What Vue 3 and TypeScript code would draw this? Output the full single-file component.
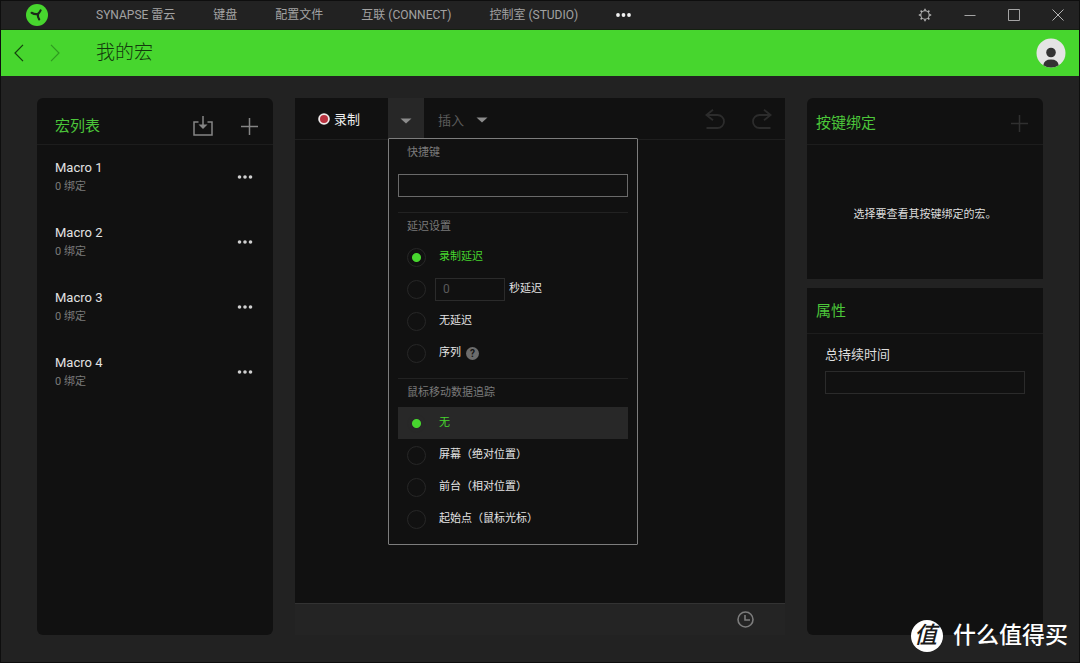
<script setup lang="ts">
import { ref } from 'vue'

interface Macro {
  name: string
  bindings: number
}

interface Option {
  id: string
  label: string
}

const tabs: string[] = ['SYNAPSE 雷云', '键盘', '配置文件', '互联 (CONNECT)', '控制室 (STUDIO)']

const macros: Macro[] = [
  { name: 'Macro 1', bindings: 0 },
  { name: 'Macro 2', bindings: 0 },
  { name: 'Macro 3', bindings: 0 },
  { name: 'Macro 4', bindings: 0 },
]

const trackingOptions: Option[] = [
  { id: 'none', label: '无' },
  { id: 'screen', label: '屏幕（绝对位置）' },
  { id: 'foreground', label: '前台（相对位置）' },
  { id: 'origin', label: '起始点（鼠标光标）' },
]

const delay = ref('record')
const tracking = ref('none')
const shortcut = ref('')
const fixedDelay = ref('')
const duration = ref('')
const gearAngles: number[] = [0, 45, 90, 135, 180, 225, 270, 315]
</script>

<template>
  <div class="window">
    <header class="topbar">
      <svg class="logo" viewBox="0 0 22 22" aria-hidden="true">
        <circle cx="11" cy="11" r="11" fill="#47d62e" />
        <path d="M5.600 8.800Q8.600 10.600 11.600 10.100Q13.400 9 14.600 6.400M11.800 10.200Q11.600 12.800 13.200 15.400" fill="none" stroke="#1c2a1a" stroke-width="2.200" stroke-linecap="round" />
        <path d="M8.600 9.600L13.600 8.400L12.600 12.800Z" fill="#1c2a1a" />
      </svg>
      <nav class="tabs">
        <a v-for="tab in tabs" :key="tab" href="#" class="tab">{{ tab }}</a>
        <button class="icon-btn" type="button" aria-label="更多">
          <svg width="16" height="4" viewBox="0 0 16 4"><g fill="#f2f2f2"><circle cx="2" cy="2" r="1.900" /><circle cx="7.500" cy="2" r="1.900" /><circle cx="13" cy="2" r="1.900" /></g></svg>
        </button>
      </nav>
      <div class="window-controls">
        <button class="icon-btn" type="button" aria-label="设置">
          <svg width="14" height="14" viewBox="0 0 14 14" fill="none" stroke="#b4b4b4">
            <circle cx="7" cy="7" r="4.200" stroke-width="1.100" />
            <path v-for="a in gearAngles" :key="a" d="M7 2.800V.8" stroke-width="1.500" :transform="`rotate(${a} 7 7)`" />
          </svg>
        </button>
        <button class="icon-btn" type="button" aria-label="最小化">
          <svg width="12" height="12" viewBox="0 0 12 12"><path d="M.5 6.500h11" stroke="#a4a4a4" /></svg>
        </button>
        <button class="icon-btn" type="button" aria-label="最大化">
          <svg width="12" height="12" viewBox="0 0 12 12"><path d="M.5 .5h11v11H.5z" fill="none" stroke="#a4a4a4" /></svg>
        </button>
        <button class="icon-btn" type="button" aria-label="关闭">
          <svg width="12" height="12" viewBox="0 0 12 12"><path d="M.5 .5l11 11M11.500 .5l-11 11" stroke="#b4b4b4" /></svg>
        </button>
      </div>
    </header>

    <div class="titlebar">
      <div class="history">
        <button class="icon-btn" type="button" aria-label="后退">
          <svg width="10" height="18" viewBox="0 0 10 18"><path d="M9 .8L1 9l8 8.200" fill="none" stroke="#14400e" stroke-width="1.200" /></svg>
        </button>
        <button class="icon-btn" type="button" aria-label="前进">
          <svg width="10" height="18" viewBox="0 0 10 18"><path d="M1 .8L9 9l-8 8.200" fill="none" stroke="#2f9a20" stroke-width="1.200" /></svg>
        </button>
      </div>
      <h1 class="page-title">我的宏</h1>
      <button class="icon-btn avatar" type="button" aria-label="账户">
        <svg width="30" height="30" viewBox="0 0 30 30">
          <circle cx="15" cy="15" r="14.500" fill="#e4e4e4" />
          <circle cx="15" cy="14.500" r="4.800" fill="#333" />
          <path d="M7.300 27.300Q8 21.500 15 21.500Q22 21.500 22.700 27.300Q19.500 29.500 15 29.500Q10.500 29.500 7.300 27.300Z" fill="#333" />
        </svg>
      </button>
    </div>

    <main class="content">
      <section class="panel macro-panel">
        <div class="panel-head list-head">
          <h2>宏列表</h2>
          <button class="icon-btn" type="button" aria-label="导入">
            <svg width="20" height="20" viewBox="0 0 20 20" fill="none" stroke="#858585" stroke-width="1.500">
              <path d="M5.500 6H1v13h18V6h-4.500M10 0v10" />
              <path d="M5.500 8.500h9L10 13z" fill="#858585" stroke="none" />
            </svg>
          </button>
          <button class="icon-btn" type="button" aria-label="新增宏">
            <svg width="17" height="17" viewBox="0 0 17 17"><path d="M8.500 0v17M0 8.500h17" stroke="#858585" stroke-width="1.500" /></svg>
          </button>
        </div>
        <ul class="macros">
          <li v-for="macro in macros" :key="macro.name" class="macro">
            <div>
              <div class="macro-name">{{ macro.name }}</div>
              <div class="macro-sub">{{ macro.bindings }} 绑定</div>
            </div>
            <button class="icon-btn" type="button" :aria-label="macro.name + ' 菜单'">
              <svg width="16" height="4" viewBox="0 0 16 4"><g fill="#d0d0d0"><circle cx="2.500" cy="2" r="1.800" /><circle cx="8" cy="2" r="1.800" /><circle cx="13.500" cy="2" r="1.800" /></g></svg>
            </button>
          </li>
        </ul>
      </section>

      <section class="editor">
        <div class="toolbar">
          <button class="tool record" type="button">
            <svg width="12" height="12" viewBox="0 0 12 12"><circle cx="6" cy="6" r="5.800" fill="#f0eaea" /><circle cx="6" cy="6" r="4" fill="#b9323f" /></svg>
            录制
          </button>
          <div class="dropdown">
            <button class="tool caret open" type="button" aria-label="录制选项" aria-expanded="true">
              <svg width="12" height="6" viewBox="0 0 12 6"><path d="M.5 .5h11L6 5.500z" fill="#8c8c8c" /></svg>
            </button>
            <div class="menu">
              <label class="menu-title" for="shortcut">快捷键</label>
              <input id="shortcut" v-model="shortcut" class="field shortcut" type="text" />

              <fieldset class="group">
                <legend class="menu-title">延迟设置</legend>
                <label class="option" :class="{ active: delay === 'record' }">
                  <input v-model="delay" type="radio" name="delay" value="record" />
                  <span>录制延迟</span>
                </label>
                <div class="option fixed">
                  <input id="delay-fixed" v-model="delay" type="radio" name="delay" value="fixed" />
                  <input v-model="fixedDelay" class="field seconds" type="text" placeholder="0" aria-label="延迟秒数" />
                  <label for="delay-fixed">秒延迟</label>
                </div>
                <label class="option">
                  <input v-model="delay" type="radio" name="delay" value="off" />
                  <span>无延迟</span>
                </label>
                <label class="option">
                  <input v-model="delay" type="radio" name="delay" value="sequence" />
                  <span>序列</span>
                  <span class="help">?</span>
                </label>
              </fieldset>

              <fieldset class="group tracking">
                <legend class="menu-title">鼠标移动数据追踪</legend>
                <label
                  v-for="option in trackingOptions"
                  :key="option.id"
                  class="option"
                  :class="{ active: tracking === option.id, filled: tracking === option.id }"
                >
                  <input v-model="tracking" type="radio" name="tracking" :value="option.id" />
                  <span>{{ option.label }}</span>
                </label>
              </fieldset>
            </div>
          </div>
          <button class="tool insert" type="button">
            插入
            <svg width="12" height="6" viewBox="0 0 12 6"><path d="M.5 .5h11L6 5.500z" fill="#8c8c8c" /></svg>
          </button>
          <div class="undo-redo">
            <button class="icon-btn" type="button" aria-label="撤销">
              <svg width="20" height="20" viewBox="0 0 20 20" fill="none" stroke="#2c2c2c" stroke-width="1.800"><path d="M8 .8L1.400 6L8 11.200M1.400 6H12.500a6.500 6.500 0 0 1 0 13H1.500" /></svg>
            </button>
            <button class="icon-btn" type="button" aria-label="重做">
              <svg width="20" height="20" viewBox="0 0 20 20" fill="none" stroke="#2c2c2c" stroke-width="1.800"><path d="M12 .8L18.600 6L12 11.200M18.600 6H7.500a6.500 6.500 0 0 0 0 13H18.500" /></svg>
            </button>
          </div>
        </div>
        <div class="canvas"></div>
        <div class="editor-foot">
          <button class="icon-btn" type="button" aria-label="时间">
            <svg width="17" height="17" viewBox="0 0 17 17" fill="none" stroke="#7c7c7c" stroke-width="1.600"><circle cx="8.500" cy="8.500" r="7.500" /><path d="M8 4v5h5" /></svg>
          </button>
        </div>
      </section>

      <div class="side">
        <section class="panel key-panel">
          <div class="panel-head key-head">
            <h2>按键绑定</h2>
            <button class="icon-btn" type="button" aria-label="新增绑定">
              <svg width="17" height="17" viewBox="0 0 17 17"><path d="M8.500 0v17M0 8.500h17" stroke="#303030" stroke-width="1.500" /></svg>
            </button>
          </div>
          <p class="empty">选择要查看其按键绑定的宏。</p>
        </section>
        <section class="panel prop-panel">
          <div class="panel-head prop-head"><h2>属性</h2></div>
          <div class="props">
            <label for="duration">总持续时间</label>
            <input id="duration" v-model="duration" class="field" type="text" />
          </div>
        </section>
      </div>
    </main>

    <div class="watermark">
      <span class="stamp">值</span>
      <span>什么值得买</span>
    </div>
  </div>
</template>

<style>
body {
  background: #111;
}
</style>

<style scoped>
.window,
.window * {
  box-sizing: border-box;
}

.window {
  position: relative;
  display: flex;
  flex-direction: column;
  min-height: 100vh;
  border: 1px solid #0e0e0e;
  background: #222;
  color: #ddd;
  font-family: Roboto, "Noto Sans CJK SC", sans-serif;
  font-size: 11px;
}

button,
input {
  font: inherit;
}

.icon-btn {
  display: flex;
  padding: 0;
  border: 0;
  background: none;
}

.icon-btn svg,
.tool svg {
  display: block;
  flex: none;
}

h1,
h2,
p,
ul,
fieldset {
  margin: 0;
  padding: 0;
}

.topbar {
  display: flex;
  align-items: center;
  height: 29px;
  padding: 0 15px 0 25px;
  border-bottom: 1px solid #142010;
}

.logo {
  width: 22px;
  height: 22px;
}

.tabs {
  display: flex;
  align-items: center;
  gap: 38px;
  margin-left: 48px;
}

.tab {
  color: #a2a2a2;
  font-size: 12px;
  line-height: 20px;
  text-decoration: none;
  white-space: nowrap;
}

.window-controls {
  display: flex;
  align-items: center;
  gap: 32px;
  margin-left: auto;
}

.titlebar {
  display: flex;
  align-items: center;
  height: 46px;
  padding: 0 13px;
  background: #47d62e;
}

.history {
  display: flex;
  gap: 26px;
}

.page-title {
  margin-left: 36px;
  color: #13380d;
  font-size: 19px;
  font-weight: 300;
  line-height: 28px;
}

.avatar {
  margin-left: auto;
}

.content {
  flex: 1;
  display: grid;
  grid-template-columns: 236px minmax(0, 1fr) 236px;
  gap: 22px;
  padding: 22px 36px 27px;
}

.panel {
  background: #111;
}

.macro-panel {
  border-radius: 6px;
}

.panel-head {
  display: flex;
  align-items: center;
  height: 47px;
  border-bottom: 1px solid #1d1d1d;
}

.panel-head h2 {
  margin-right: auto;
  color: #4cc63a;
  font-size: 15px;
  font-weight: 400;
  line-height: 22px;
}

.list-head {
  gap: 28px;
  padding: 10px 15px 0 18px;
}

.key-head {
  padding: 4px 15px 0 9px;
}

.prop-head {
  height: 46px;
  padding: 0 9px;
}

.macros {
  display: grid;
  gap: 1px;
  list-style: none;
}

.macro {
  display: flex;
  align-items: center;
  justify-content: space-between;
  height: 64px;
  padding: 0 20px 0 18px;
}

.macro-name {
  color: #e2e2e2;
  font-size: 13px;
  line-height: 19px;
}

.macro-sub {
  color: #7a7a7a;
  line-height: 19px;
}

.editor {
  display: flex;
  flex-direction: column;
  background: #111;
}

.toolbar {
  display: flex;
  height: 42px;
  border-bottom: 1px solid #1f1f1f;
}

.tool {
  display: flex;
  align-items: center;
  height: 41px;
  border: 0;
  background: none;
  font-size: 13px;
}

.record {
  width: 93px;
  gap: 4px;
  padding: 0 0 0 23px;
  color: #eee;
}

.dropdown {
  position: relative;
}

.caret {
  justify-content: center;
  width: 36px;
  padding: 4px 0 0;
}

.open {
  background: #272727;
}

.insert {
  gap: 12px;
  padding: 2px 14px 0;
  color: #5c5c5c;
}

.undo-redo {
  display: flex;
  align-items: center;
  gap: 27px;
  margin-left: auto;
  padding-right: 13px;
}

.canvas {
  flex: 1;
}

.editor-foot {
  display: flex;
  align-items: center;
  justify-content: flex-end;
  height: 32px;
  padding-right: 31px;
  border-top: 1px solid #333;
  background: #242424;
}

.menu {
  position: absolute;
  z-index: 2;
  top: 40px;
  left: 0;
  width: 250px;
  padding: 0 9px 9px;
  border: 1px solid #7d7d7d;
  border-radius: 1px;
  background: #111;
}

.menu-title {
  display: block;
  width: 100%;
  height: 28px;
  padding: 0 9px;
  color: #7a7a7a;
  line-height: 28px;
}

legend.menu-title {
  float: left;
}

.field {
  display: block;
  width: 100%;
  height: 23px;
  padding: 0 7px;
  border: 1px solid #2b2b2b;
  border-radius: 0;
  background: transparent;
  color: #ddd;
  font-size: 12px;
}

.field::placeholder {
  color: #5a5a5a;
  opacity: 1;
}

.shortcut {
  margin: 7px 0 15px;
  border-color: #6a6a6a;
}

.group {
  min-width: 0;
  border: 0;
  border-top: 1px solid #222;
}

.tracking {
  margin-top: 9px;
}

.option {
  display: flex;
  clear: both;
  align-items: center;
  height: 32px;
  padding-left: 9px;
  color: #e4e4e4;
  line-height: 20px;
}

.option input[type="radio"] {
  appearance: none;
  flex: none;
  width: 19px;
  height: 19px;
  margin: 0 13px 0 0;
  border: 1px solid #272727;
  border-radius: 50%;
  background: transparent;
}

.option input[type="radio"]:checked {
  background: radial-gradient(circle, #47d62e 0 4px, transparent 5px);
}

.active {
  color: #47d62e;
}

.filled {
  background: #282828;
}

.fixed input[type="radio"] {
  margin-right: 9px;
}

.seconds {
  width: 70px;
  margin-right: 4px;
}

.help {
  width: 13px;
  height: 13px;
  margin-left: 5px;
  border-radius: 50%;
  background: #6c6c6c;
  color: #151515;
  font-size: 10px;
  font-weight: 700;
  line-height: 13px;
  text-align: center;
}

.side {
  display: flex;
  flex-direction: column;
  gap: 9px;
}

.key-panel {
  display: flex;
  flex-direction: column;
  height: 181px;
  border-radius: 6px 6px 0 0;
}

.empty {
  display: flex;
  flex: 1;
  align-items: center;
  justify-content: center;
  padding-top: 6px;
  line-height: 20px;
}

.prop-panel {
  flex: 1;
  border-radius: 0 0 6px 6px;
}

.props {
  padding: 11px 18px;
}

.props label {
  display: block;
  margin-bottom: 6px;
  font-size: 13px;
  line-height: 20px;
}

.watermark {
  position: absolute;
  right: 11px;
  bottom: 10px;
  display: flex;
  align-items: center;
  gap: 10px;
  color: #fff;
  font-size: 23px;
  font-weight: 500;
  line-height: 32px;
}

.stamp {
  width: 32px;
  height: 32px;
  padding-right: 3px;
  border-radius: 50%;
  background: #fff;
  color: #1a1a1a;
  font-style: italic;
  text-align: center;
}
</style>
